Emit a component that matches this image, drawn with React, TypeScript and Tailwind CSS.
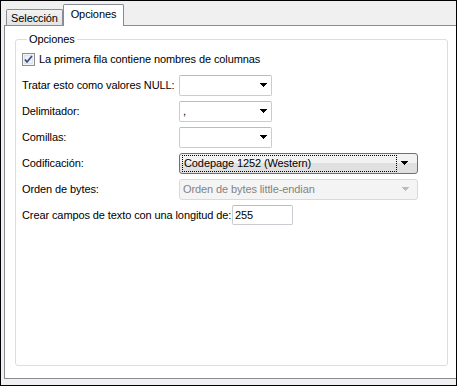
import React from "react";

const font = { fontFamily: "Tahoma, 'Liberation Sans', Arial, sans-serif" };

function Arrow({ color = "#000" }: { color?: string }) {
  return (
    <svg width="7" height="4" viewBox="0 0 7 4" shapeRendering="crispEdges" className="shrink-0">
      <path d="M0 0h7v1H0zM1 1h5v1H1zM2 2h3v1H2zM3 3h1v1H3z" fill={color} />
    </svg>
  );
}

function Combo({ value = "" }: { value?: string }) {
  return (
    <div className="box-border w-[93px] h-[21px] bg-white border border-[#c9ccd1] border-t-[#b9bcc1] rounded-[2px] flex items-center pl-[3px] pr-[4px]">
      <span className="flex-1 text-[11px] leading-[13px] text-black">{value}</span>
      <Arrow />
    </div>
  );
}

function Checkbox() {
  return (
    <svg width="13" height="13" viewBox="0 0 13 13" shapeRendering="crispEdges" className="shrink-0">
      <rect x="0.5" y="0.5" width="12" height="12" fill="#f4f4f4" stroke="#8e8f8f" />
      <rect x="2" y="2" width="9" height="9" fill="#dfe3ea" />
      <rect x="3" y="3" width="7" height="7" fill="#eef0f4" />
      <path
        d="M3 6.5 L5 9 L10 3"
        fill="none"
        stroke="#2c4a8a"
        strokeWidth="1.6"
        shapeRendering="geometricPrecision"
      />
    </svg>
  );
}

export default function App() {
  return (
    <div
      className="box-border w-[457px] h-[386px] border border-black bg-[#f0f0f0] flex flex-col pt-[3px] pl-[3px] pb-[6px] text-[11px] leading-[13px] tracking-[-0.1px] text-black whitespace-nowrap"
      style={font}
    >
      {/* tab strip */}
      <div className="h-[21px] flex items-end pl-[2px]">
        <div className="box-border h-[16px] w-[57px] border border-b-0 border-[#898c95] rounded-t-[2px] bg-gradient-to-b from-[#f2f2f2] to-[#e3e3e3] flex items-center justify-center pt-px">
          Selección
        </div>
        <div className="box-border relative z-10 -mb-px h-[22px] w-[61px] border border-b-0 border-[#898c95] rounded-t-[2px] bg-white flex items-center justify-center pb-[2px]">
          Opciones
        </div>
      </div>
      {/* panel */}
      <div className="flex-1 flex flex-col border-l border-t border-b border-[#898c95] bg-white pl-[10px]">
        <fieldset className="box-border flex-1 mt-[7px] mb-[12px] w-[433px] border border-[#d5dfe5] rounded-[3px] pl-[6px] m-0">
          <legend className="ml-[5px] px-[2px] text-[11px] leading-[13px]">Opciones</legend>
          <div className="h-[26px] flex items-center">
            <Checkbox />
            <span className="ml-[4px]">La primera fila contiene nombres de columnas</span>
          </div>
          <div className="h-[26px] flex items-center">
            <span className="w-[157px] shrink-0">Tratar esto como valores NULL:</span>
            <Combo />
          </div>
          <div className="h-[26px] flex items-center">
            <span className="w-[157px] shrink-0">Delimitador:</span>
            <Combo value="," />
          </div>
          <div className="h-[26px] flex items-center">
            <span className="w-[157px] shrink-0">Comillas:</span>
            <Combo />
          </div>
          <div className="h-[26px] flex items-center">
            <span className="w-[157px] shrink-0">Codificación:</span>
            <div className="box-border w-[239px] h-[21px] border border-[#707070] rounded-[3px] bg-gradient-to-b from-[#f2f2f2] from-50% to-[#e0e0e0] to-50% flex items-center pl-[2px] pr-[9px]">
              <div className="flex-1 h-[17px] border border-dotted border-black flex items-center pl-px mr-[4px]">
                Codepage 1252 (Western)
              </div>
              <Arrow />
            </div>
          </div>
          <div className="h-[26px] flex items-center">
            <span className="w-[157px] shrink-0">Orden de bytes:</span>
            <div className="box-border w-[239px] h-[21px] border border-[#d9d9d9] rounded-[3px] bg-[#f4f4f4] flex items-center pl-[3px] pr-[8px]">
              <span className="flex-1 text-[#838383]">Orden de bytes little-endian</span>
              <Arrow color="#bcbcbc" />
            </div>
          </div>
          <div className="h-[26px] flex items-center">
            <span className="w-[210px] shrink-0">Crear campos de texto con una longitud de:</span>
            <div className="box-border w-[61px] h-[20px] bg-white border border-[#c9ccd1] border-t-[#b9bcc1] rounded-[2px] flex items-center pl-[2px]">
              255
            </div>
          </div>
        </fieldset>
      </div>
    </div>
  );
}
